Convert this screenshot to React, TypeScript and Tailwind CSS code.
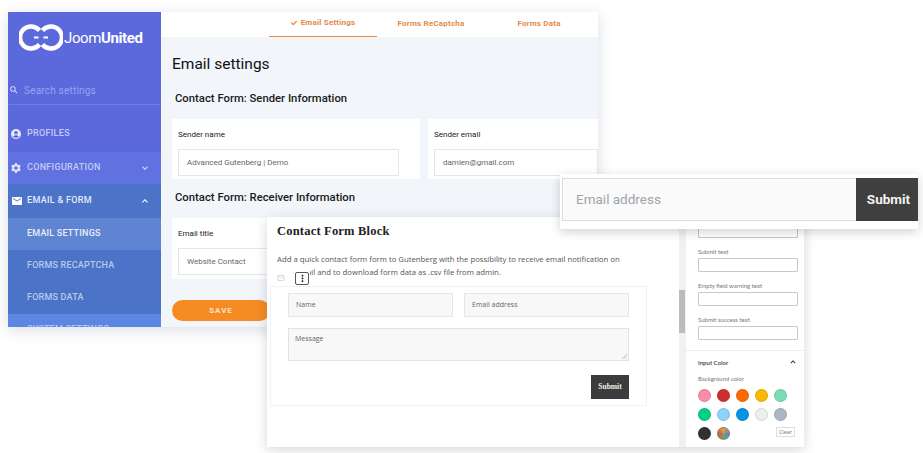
import React from "react";
import { FaCheck } from "react-icons/fa";
import {
  MdAccountCircle,
  MdEmail,
  MdExpandLess,
  MdExpandMore,
  MdMailOutline,
  MdMoreVert,
  MdSearch,
  MdSettings,
} from "react-icons/md";

const swatches = [
  "bg-[#f78da7]",
  "bg-[#cf2e2e]",
  "bg-[#ff6900]",
  "bg-[#fcb900]",
  "bg-[#7bdcb5]",
  "bg-[#00d084]",
  "bg-[#8ed1fc]",
  "bg-[#0693e3]",
  "bg-[#eeeeee]",
  "bg-[#abb8c3]",
  "bg-[#313131]",
  "bg-[conic-gradient(#e0a040,#5f8fc0,#70a070,#d06040,#e0a040)]",
];

const Logo = () => (
  <svg width="44" height="27" viewBox="0 0 44 27" fill="none" stroke="#fff" strokeWidth="4.4">
    <path d="M20.5 6.5 A11 11 0 1 0 20.5 20.5" />
    <path d="M23.5 6.5 A11 11 0 1 1 23.5 20.5" />
    <path d="M15 13.5 H19.5 M24.5 13.5 H29" strokeWidth="2.2" />
  </svg>
);

const Sidebar = () => (
  <div className="flex w-[153px] shrink-0 flex-col overflow-hidden bg-[#5b69dd] font-['Roboto',sans-serif] [&>*]:shrink-0">
    <div className="flex h-[53px] items-start gap-px pl-[11px] pt-[12px]">
      <Logo />
      <span className="mt-[5px] text-[15px] leading-[18px] tracking-[-0.4px] text-white">
        Joom<span className="font-bold">United</span>
      </span>
    </div>
    <div className="mx-px mt-[15px] flex h-[25px] items-center gap-[5px] border-b border-[#6f7ce6] pb-[4px]">
      <MdSearch className="h-[10px] w-[10px] text-[#e4e8fb]" />
      <span className="text-[10px] tracking-[0.2px] text-[#98a4f0]">Search settings</span>
    </div>
    <div className="mt-[14px] flex h-[30px] items-center gap-[5px] pl-[2px] text-[9px] font-medium tracking-[0.3px] text-[#c3cbf6]">
      <MdAccountCircle className="h-[12px] w-[12px] text-[#e3e7fb]" />
      PROFILES
    </div>
    <div className="mt-[3px] flex h-[32px] items-center bg-[#5f72e0] pl-[2px] pr-[10px] text-[9px] font-medium tracking-[0.3px] text-[#c3cbf6]">
      <MdSettings className="h-[12px] w-[12px] text-[#e3e7fb]" />
      <span className="ml-[5px] flex-1">CONFIGURATION</span>
      <MdExpandMore className="h-[12px] w-[12px] text-[#d5daf8]" />
    </div>
    <div className="flex h-[34px] items-center bg-[#4b74c9] pl-[3px] pr-[10px] text-[9px] font-medium tracking-[0.3px] text-[#e4eafa]">
      <MdEmail className="h-[12px] w-[12px] text-white" />
      <span className="ml-[4px] flex-1">EMAIL &amp; FORM</span>
      <MdExpandLess className="h-[12px] w-[12px] text-white" />
    </div>
    <div className="flex h-[32px] items-center bg-[#5f85d2] pl-[19px] text-[9px] font-medium tracking-[0.2px] text-[#e6ecfa]">
      EMAIL SETTINGS
    </div>
    <div className="flex h-[32px] items-center bg-[#4b74c9] pl-[19px] text-[9px] font-medium tracking-[0.2px] text-[#b7c9ee]">
      FORMS RECAPTCHA
    </div>
    <div className="flex h-[32px] items-center bg-[#4b74c9] pl-[19px] text-[9px] font-medium tracking-[0.2px] text-[#b7c9ee]">
      FORMS DATA
    </div>
    <div className="flex h-[32px] items-center bg-[#5b86e2] pl-[19px] text-[9px] font-medium tracking-[0.2px] text-[#b7c9ee]">
      SYSTEM SETTINGS
    </div>
  </div>
);

const SettingField = ({ label, value, width }: { label: string; value: string; width: string }) => (
  <div className="h-full bg-white pl-[6px] pt-[11px]">
    <div className="text-[8px] leading-[10px] text-[#222]">{label}</div>
    <div
      className={`mt-[9px] flex h-[27px] items-center border border-[#e3e6ec] pl-[8px] text-[8px] text-[#666] ${width}`}
    >
      {value}
    </div>
  </div>
);

const EmailSettings = () => (
  <div className="absolute left-[8px] top-[12px] flex h-[315px] w-[590px] overflow-hidden bg-[#f2f5fa] shadow-[0_3px_14px_rgba(40,50,80,0.16)]">
    <Sidebar />
    <div className="flex-1 font-['Roboto',sans-serif]">
      <div className="flex h-[25px] bg-white pl-[108px] text-[8px] font-bold tracking-[0.2px] text-[#e58a45]">
        <div className="flex w-[108px] items-center justify-center gap-[4px] border-b border-[#ee8a3c] pb-[2px]">
          <FaCheck className="h-[6px] w-[6px] text-[#ee7f2d]" />
          Email Settings
        </div>
        <div className="flex w-[108px] items-center justify-center pb-[2px]">Forms ReCaptcha</div>
        <div className="flex w-[108px] items-center justify-center pb-[2px]">Forms Data</div>
      </div>
      <div className="pl-[11px]">
        <h1 className="mt-[17px] text-[15.5px] leading-[20px] text-[#111]">Email settings</h1>
        <h2 className="ml-[3px] mt-[18px] text-[11.3px] font-medium leading-[14px] text-[#1a1a1a]">
          Contact Form: Sender Information
        </h2>
        <div className="mt-[13px] flex h-[60px] gap-[8px]">
          <div className="w-[248px]">
            <SettingField label="Sender name" value="Advanced Gutenberg | Demo" width="w-[221px]" />
          </div>
          <div className="flex-1">
            <SettingField label="Sender email" value="damien@gmail.com" width="w-full" />
          </div>
        </div>
        <h2 className="ml-[3px] mt-[12px] text-[11.3px] font-medium leading-[14px] text-[#1a1a1a]">
          Contact Form: Receiver Information
        </h2>
        <div className="mt-[13px] flex h-[61px] gap-[8px]">
          <div className="w-[248px]">
            <SettingField label="Email title" value="Website Contact" width="w-[221px]" />
          </div>
        </div>
        <button className="mt-[21px] h-[21px] w-[98px] rounded-full bg-[#f68b23] text-[8px] font-bold tracking-[1px] text-[#fde3c8]">
          SAVE
        </button>
      </div>
    </div>
  </div>
);

const SideInput = ({ label }: { label: string }) => (
  <div className="mb-[10px]">
    <div className="mb-[2px] text-[6px] leading-[8px] text-[#777]">{label}</div>
    <div className="h-[14px] w-[100px] rounded-[1px] border border-[#c8c8c8] bg-white" />
  </div>
);

const FormBlock = () => (
  <div className="absolute left-[267px] top-[217px] flex h-[230px] w-[537px] bg-white font-['Open_Sans',sans-serif] shadow-[0_3px_12px_rgba(0,0,0,0.16)]">
    <div className="relative w-[412px] shrink-0">
      <h3 className="ml-[10px] mt-[7px] font-['Liberation_Serif',serif] text-[12.5px] font-bold leading-[14px] tracking-[0.2px] text-[#222]">
        Contact Form Block
      </h3>
      <p className="ml-[10px] mt-[15px] w-[380px] text-[7.75px] leading-[13px] text-[#555]">
        Add a quick contact form form to Gutenberg with the possibility to receive email notification on
        <br />
        your email and to download form data as .csv file from admin.
      </p>
      <div className="absolute left-0 top-[53px] flex h-[16px] w-[43px] items-center gap-[10px] bg-white pl-[10px]">
        <MdMailOutline className="h-[8px] w-[8px] text-[#ccc]" />
        <div className="flex h-[13px] w-[14px] items-center justify-center rounded-[2px] border border-[#555] bg-white">
          <MdMoreVert className="h-[11px] w-[11px] text-[#222]" />
        </div>
      </div>
      <div className="ml-[3px] mt-[7px] h-[120px] w-[377px] border border-[#f1f1f1] px-[17px] pt-[6px]">
        <div className="flex gap-[11px] text-[7px] text-[#666]">
          <div className="flex h-[24px] w-[165px] items-center border border-[#e6e6e6] bg-[#f8f8f8] pl-[7px]">Name</div>
          <div className="flex h-[24px] w-[165px] items-center border border-[#e6e6e6] bg-[#f8f8f8] pl-[7px]">
            Email address
          </div>
        </div>
        <div className="relative mt-[11px] h-[33px] w-[341px] border border-[#e2e2e2] bg-[#f8f8f8] pl-[6px] pt-[5px] text-[7px] leading-[10px] text-[#666]">
          Message
          <svg className="absolute bottom-px right-px" width="5" height="5" viewBox="0 0 5 5" stroke="#999" strokeWidth="0.6">
            <path d="M0 5 L5 0 M2.5 5 L5 2.5" />
          </svg>
        </div>
        <div className="mt-[14px] flex justify-end">
          <button className="h-[24px] w-[38px] bg-[#3c3c3c] font-['Liberation_Serif',serif] text-[7.5px] font-bold text-[#f0f0f0]">
            Submit
          </button>
        </div>
      </div>
    </div>
    <div className="w-[7px] shrink-0 bg-[#f1f1f1] pt-[73px]">
      <div className="h-[43px] w-[6px] bg-[#bcbcbc]" />
    </div>
    <div className="min-w-0 flex-1 pt-[7px] font-['Lato',sans-serif]">
      <div className="pl-[12px]">
        <div className="mb-[10px] h-[14px] w-[100px] rounded-[1px] border border-[#c8c8c8] bg-white" />
        <SideInput label="Submit text" />
        <SideInput label="Empty field warning text" />
        <SideInput label="Submit success text" />
      </div>
      <div className="mt-px border-t border-[#eeeeee] pl-[12px] pt-[7px]">
        <div className="flex h-[8px] w-[100px] items-center justify-between text-[6px] font-bold text-[#555]">
          Input Color
          <MdExpandLess className="h-[10px] w-[10px] text-[#222]" />
        </div>
        <div className="mt-[9px] text-[6px] leading-[8px] text-[#777]">Background color</div>
        <div className="mt-[6px] grid grid-cols-[repeat(5,13px)] gap-[6px]">
          {swatches.map((color) => (
            <div key={color} className={`h-[13px] w-[13px] rounded-full border border-black/10 ${color}`} />
          ))}
        </div>
      </div>
    </div>
    <button className="absolute bottom-[10px] right-[9px] flex h-[10px] w-[19px] items-center justify-center border border-[#ddd] bg-white text-[5.5px] text-[#777]">
      Clear
    </button>
  </div>
);

const Subscribe = () => (
  <div className="absolute left-[560px] top-[174px] w-[358px] bg-white pb-[8px] pl-[2px] pt-[4px] font-['Roboto',sans-serif] shadow-[0_3px_10px_rgba(0,0,0,0.18)]">
    <div className="flex h-[43px]">
      <div className="flex flex-1 items-center border border-r-0 border-[#dcdcdc] bg-[#fafafa] pl-[13px] text-[13.5px] text-[#a0a4ab]">
        Email address
      </div>
      <button className="w-[62px] bg-[#3f3f3f] pl-[3px] text-[13.5px] font-bold text-[#f2f2f2]">Submit</button>
    </div>
  </div>
);

export default function App() {
  return (
    <div className="relative h-[453px] w-[923px] overflow-hidden bg-white">
      <EmailSettings />
      <FormBlock />
      <Subscribe />
    </div>
  );
}
